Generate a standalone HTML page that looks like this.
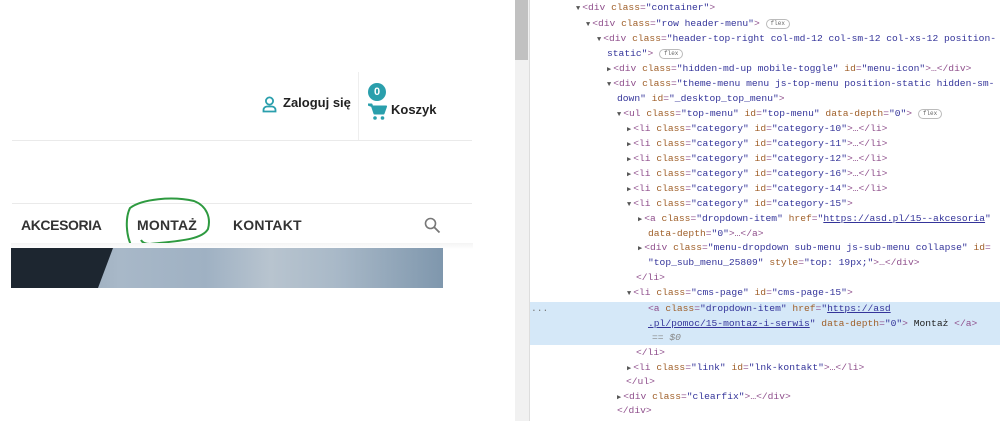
<!DOCTYPE html>
<html><head><meta charset="utf-8"><style>
body{margin:0;width:1000px;height:421px;overflow:hidden;background:#fff;position:relative;font-family:"Liberation Sans",sans-serif}
.a{position:absolute}
.l{position:absolute;font-family:"Liberation Mono",monospace;font-size:9.65px;line-height:15px;white-space:pre;color:#8f4f8c}
.n{color:#a0602a}.v{color:#34349a}.t{color:#555;font-size:7px;margin-right:2px}.u{text-decoration:underline}
.fx{display:inline-block;border:1px solid #bbb;border-radius:6px;font-size:6px;line-height:8px;padding:0 4px;color:#666;vertical-align:1px}
.nav{position:absolute;top:217px;font-weight:bold;font-size:14px;color:#333;letter-spacing:0.2px}
</style></head><body>
<div class="a" style="left:358px;top:72px;width:1px;height:68px;background:#eee"></div>
<div class="a" style="left:12px;top:140px;width:460px;height:1px;background:#eaeaea"></div>
<div class="a" style="left:12px;top:203px;width:460px;height:1px;background:#eaeaea"></div>
<svg class="a" style="left:262px;top:96px" width="15" height="17" viewBox="0 0 15 17"><circle cx="7.5" cy="5" r="3.6" fill="none" stroke="#2a9fac" stroke-width="1.8"/><path d="M1.5 15.5v-1.5a3.5 3.5 0 0 1 3.5-3.5h5a3.5 3.5 0 0 1 3.5 3.5v1.5z" fill="none" stroke="#2a9fac" stroke-width="1.8"/></svg>
<div class="a" style="left:283px;top:95px;font-size:13px;font-weight:bold;color:#222">Zaloguj się</div>
<svg class="a" style="left:368px;top:103px" width="19" height="18" viewBox="0 0 19 18"><path d="M0 1.5h3.5l3 9h9l2.5-7h-13z" fill="#2a9fac" stroke="#2a9fac" stroke-width="2" stroke-linejoin="round"/><circle cx="7" cy="15" r="1.8" fill="#2a9fac"/><circle cx="14.5" cy="15" r="1.8" fill="#2a9fac"/></svg>
<div class="a" style="left:368px;top:83px;width:18px;height:18px;border-radius:50%;background:#2a9fac;color:#fff;font-size:11px;font-weight:bold;text-align:center;line-height:18px">0</div>
<div class="a" style="left:391px;top:102px;font-size:13px;font-weight:bold;color:#222">Koszyk</div>
<div class="nav" style="left:21px;letter-spacing:-0.4px">AKCESORIA</div>
<div class="nav" style="left:137px">MONTAŻ</div>
<div class="nav" style="left:233px">KONTAKT</div>
<svg class="a" style="left:424px;top:217px" width="17" height="17" viewBox="0 0 17 17"><circle cx="6.5" cy="6.5" r="5" fill="none" stroke="#777" stroke-width="1.6"/><path d="M10 10l5.5 5.5" stroke="#777" stroke-width="1.8"/></svg>
<svg class="a" style="left:122px;top:196px" width="92" height="56" viewBox="0 0 92 56"><path d="M10 51C4 40 3 22 8 12C20 3 50 0 72 5C85 10 89 22 86 33C80 44 55 45 28 48C22 48 20 46 19 44" fill="none" stroke="#2e9a40" stroke-width="2"/></svg>
<div class="a" style="left:11px;top:243px;width:462px;height:6px;background:linear-gradient(#f4f4f4,#fff)"></div>
<div class="a" style="left:11px;top:248px;width:432px;height:40px;background:linear-gradient(90deg,#8a9aaa 0%,#a8b8c8 25%,#9fb1c3 45%,#b8c4cf 60%,#a9b9c8 75%,#7f97ad 100%)"></div>
<svg class="a" style="left:11px;top:248px" width="105" height="40"><polygon points="0,0 102,0 87,40 0,40" fill="#1d2630"/></svg>
<div class="a" style="left:515px;top:0;width:14px;height:421px;background:#f1f1f1"></div>
<div class="a" style="left:515px;top:0;width:13px;height:60px;background:#c1c1c1"></div>
<div class="a" style="left:529px;top:0;width:1px;height:421px;background:#ddd"></div>
<div class="a" style="left:530px;top:302px;width:470px;height:43px;background:#d5e8f8"></div>
<div class="l" style="left:531px;top:301px;color:#777">...</div>
<div class="l" style="left:576px;top:0"><span class="t">▼</span>&lt;div <span class="n">class</span>=<span class="v">"container"</span>&gt;</div>
<div class="l" style="left:586px;top:16px"><span class="t">▼</span>&lt;div <span class="n">class</span>=<span class="v">"row header-menu"</span>&gt; <span class="fx">flex</span></div>
<div class="l" style="left:597px;top:31px"><span class="t">▼</span>&lt;div <span class="n">class</span>=<span class="v">"header-top-right col-md-12 col-sm-12 col-xs-12 position-</span></div>
<div class="l" style="left:607px;top:46px"><span class="v">static"</span>&gt; <span class="fx">flex</span></div>
<div class="l" style="left:607px;top:61px"><span class="t">▶</span>&lt;div <span class="n">class</span>=<span class="v">"hidden-md-up mobile-toggle"</span> <span class="n">id</span>=<span class="v">"menu-icon"</span>&gt;…&lt;/div&gt;</div>
<div class="l" style="left:607px;top:76px"><span class="t">▼</span>&lt;div <span class="n">class</span>=<span class="v">"theme-menu menu js-top-menu position-static hidden-sm-</span></div>
<div class="l" style="left:617px;top:91px"><span class="v">down"</span> <span class="n">id</span>=<span class="v">"_desktop_top_menu"</span>&gt;</div>
<div class="l" style="left:617px;top:106px"><span class="t">▼</span>&lt;ul <span class="n">class</span>=<span class="v">"top-menu"</span> <span class="n">id</span>=<span class="v">"top-menu"</span> <span class="n">data-depth</span>=<span class="v">"0"</span>&gt; <span class="fx">flex</span></div>
<div class="l" style="left:627px;top:121px"><span class="t">▶</span>&lt;li <span class="n">class</span>=<span class="v">"category"</span> <span class="n">id</span>=<span class="v">"category-10"</span>&gt;…&lt;/li&gt;</div>
<div class="l" style="left:627px;top:136px"><span class="t">▶</span>&lt;li <span class="n">class</span>=<span class="v">"category"</span> <span class="n">id</span>=<span class="v">"category-11"</span>&gt;…&lt;/li&gt;</div>
<div class="l" style="left:627px;top:151px"><span class="t">▶</span>&lt;li <span class="n">class</span>=<span class="v">"category"</span> <span class="n">id</span>=<span class="v">"category-12"</span>&gt;…&lt;/li&gt;</div>
<div class="l" style="left:627px;top:166px"><span class="t">▶</span>&lt;li <span class="n">class</span>=<span class="v">"category"</span> <span class="n">id</span>=<span class="v">"category-16"</span>&gt;…&lt;/li&gt;</div>
<div class="l" style="left:627px;top:181px"><span class="t">▶</span>&lt;li <span class="n">class</span>=<span class="v">"category"</span> <span class="n">id</span>=<span class="v">"category-14"</span>&gt;…&lt;/li&gt;</div>
<div class="l" style="left:627px;top:196px"><span class="t">▼</span>&lt;li <span class="n">class</span>=<span class="v">"category"</span> <span class="n">id</span>=<span class="v">"category-15"</span>&gt;</div>
<div class="l" style="left:638px;top:211px"><span class="t">▶</span>&lt;a <span class="n">class</span>=<span class="v">"dropdown-item"</span> <span class="n">href</span>=<span class="v">"<span class="u">https://asd.pl/15--akcesoria</span>"</span></div>
<div class="l" style="left:648px;top:226px"><span class="n">data-depth</span>=<span class="v">"0"</span>&gt;…&lt;/a&gt;</div>
<div class="l" style="left:638px;top:240px"><span class="t">▶</span>&lt;div <span class="n">class</span>=<span class="v">"menu-dropdown sub-menu js-sub-menu collapse"</span> <span class="n">id</span>=</div>
<div class="l" style="left:648px;top:255px"><span class="v">"top_sub_menu_25809"</span> <span class="n">style</span>=<span class="v">"top: 19px;"</span>&gt;…&lt;/div&gt;</div>
<div class="l" style="left:636px;top:270px">&lt;/li&gt;</div>
<div class="l" style="left:627px;top:285px"><span class="t">▼</span>&lt;li <span class="n">class</span>=<span class="v">"cms-page"</span> <span class="n">id</span>=<span class="v">"cms-page-15"</span>&gt;</div>
<div class="l" style="left:648px;top:301px">&lt;a <span class="n">class</span>=<span class="v">"dropdown-item"</span> <span class="n">href</span>=<span class="v">"<span class="u">https://asd</span></span></div>
<div class="l" style="left:648px;top:316px"><span class="v"><span class="u">.pl/pomoc/15-montaz-i-serwis</span>"</span> <span class="n">data-depth</span>=<span class="v">"0"</span>&gt;<span style="color:#222"> Montaż </span>&lt;/a&gt;</div>
<div class="l" style="left:652px;top:330px;color:#888;font-style:italic">== $0</div>
<div class="l" style="left:636px;top:345px">&lt;/li&gt;</div>
<div class="l" style="left:627px;top:360px"><span class="t">▶</span>&lt;li <span class="n">class</span>=<span class="v">"link"</span> <span class="n">id</span>=<span class="v">"lnk-kontakt"</span>&gt;…&lt;/li&gt;</div>
<div class="l" style="left:626px;top:374px">&lt;/ul&gt;</div>
<div class="l" style="left:617px;top:389px"><span class="t">▶</span>&lt;div <span class="n">class</span>=<span class="v">"clearfix"</span>&gt;…&lt;/div&gt;</div>
<div class="l" style="left:617px;top:403px">&lt;/div&gt;</div>
</body></html>
